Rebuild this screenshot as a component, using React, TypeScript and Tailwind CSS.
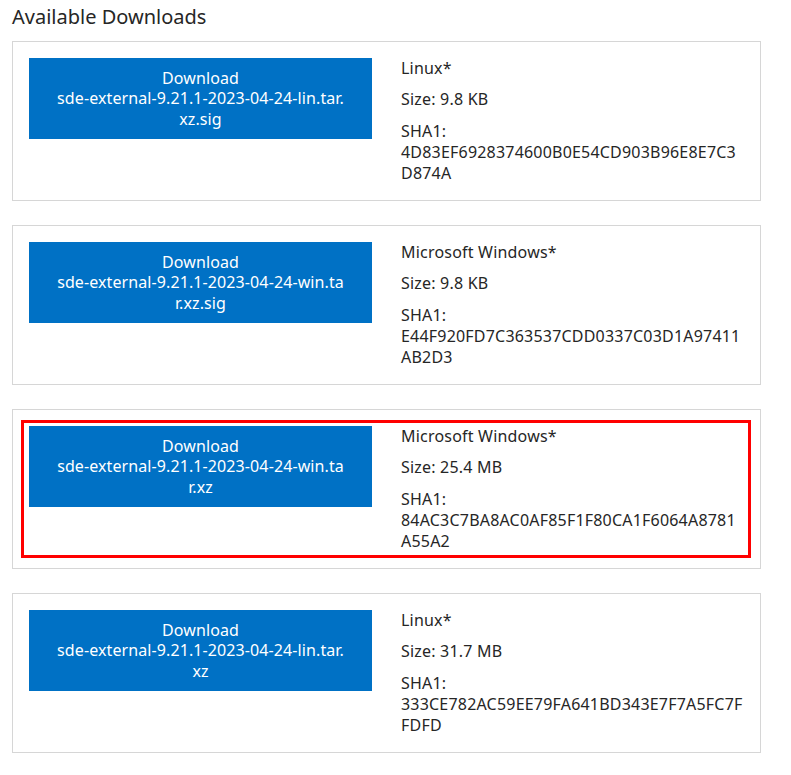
import React from "react";

type Item = {
  btn: string[];
  os: string;
  size: string;
  sha: string[];
  highlight?: boolean;
};

const items: Item[] = [
  {
    btn: ["sde-external-9.21.1-2023-04-24-lin.tar.", "xz.sig"],
    os: "Linux*",
    size: "Size: 9.8 KB",
    sha: ["4D83EF6928374600B0E54CD903B96E8E7C3", "D874A"],
  },
  {
    btn: ["sde-external-9.21.1-2023-04-24-win.ta", "r.xz.sig"],
    os: "Microsoft Windows*",
    size: "Size: 9.8 KB",
    sha: ["E44F920FD7C363537CDD0337C03D1A97411", "AB2D3"],
  },
  {
    btn: ["sde-external-9.21.1-2023-04-24-win.ta", "r.xz"],
    os: "Microsoft Windows*",
    size: "Size: 25.4 MB",
    sha: ["84AC3C7BA8AC0AF85F1F80CA1F6064A8781", "A55A2"],
    highlight: true,
  },
  {
    btn: ["sde-external-9.21.1-2023-04-24-lin.tar.", "xz"],
    os: "Linux*",
    size: "Size: 31.7 MB",
    sha: ["333CE782AC59EE79FA641BD343E7F7A5FC7F", "FDFD"],
  },
];

export default function App() {
  return (
    <div
      className="w-[791px] h-[775px] bg-white overflow-hidden text-[#262626]"
      style={{ fontFamily: '"Noto Sans", "Open Sans", sans-serif' }}
    >
      <div className="pl-[12px] pr-[30px]">
        <h2 className="text-[20px] leading-[28px] pt-[3px] pb-[10px] font-normal text-[#262626]">
          Available Downloads
        </h2>
        <div className="flex flex-col gap-[24px]">
          {items.map((it, i) => (
            <div
              key={i}
              className="relative border border-[#d6d6d6] p-[16px] grid grid-cols-[343px_343px] gap-[29px]"
            >
              <a className="h-[81px] bg-[#0071c5] text-white text-[16px] leading-[20.5px] flex flex-col items-center justify-center text-center tracking-[0.1px]">
                <span>Download</span>
                {it.btn.map((l, j) => (
                  <span key={j}>{l}</span>
                ))}
              </a>
              <div className="text-[16px] leading-[21px] tracking-[0.2px] flex flex-col whitespace-nowrap">
                <div>{it.os}</div>
                <div className="mt-[10px]">{it.size}</div>
                <div className="mt-[11px]">SHA1:</div>
                {it.sha.map((l, j) => (
                  <div key={j}>{l}</div>
                ))}
              </div>
              {it.highlight && (
                <div className="absolute left-[8px] top-[10px] right-[9px] bottom-[10px] border-[3px] border-[#ff0000] pointer-events-none" />
              )}
            </div>
          ))}
        </div>
      </div>
    </div>
  );
}
